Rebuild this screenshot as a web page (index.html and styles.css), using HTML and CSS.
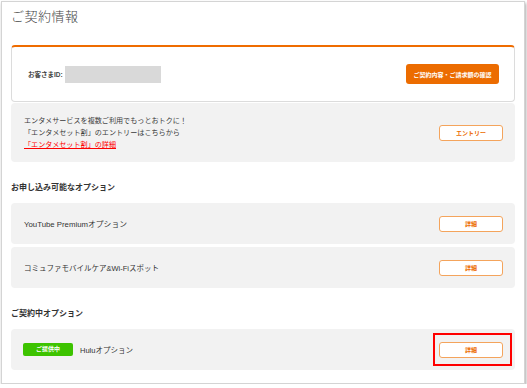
FILE: index.html
```html
<!DOCTYPE html>
<html lang="ja">
<head>
    <meta charset="UTF-8">
    <meta name="viewport" content="width=device-width, initial-scale=1.0">
    <title>ご契約情報</title>
    <link rel="stylesheet" href="styles.css">
</head>
<body>
    <div class="frame">
        <h1 class="title">ご契約情報</h1>

        <div class="account-card">
            <div class="account-id">
                <span class="id-label">お客さまID:</span>
                <span class="id-mask"></span>
            </div>
            <button class="primary-btn" type="button">ご契約内容・ご請求額の確認</button>
        </div>

        <div class="panel promo">
            <div class="promo-text">
                <p>エンタメサービスを複数ご利用でもっとおトクに！</p>
                <p>「エンタメセット割」のエントリーはこちらから</p>
                <p><a href="#">「エンタメセット割」の詳細</a></p>
            </div>
            <button class="outline-btn" type="button">エントリー</button>
        </div>

        <h2 class="section-title">お申し込み可能なオプション</h2>
        <div class="panel option-row">
            <span class="option-name latin">YouTube Premiumオプション</span>
            <button class="outline-btn" type="button">詳細</button>
        </div>
        <div class="panel option-row">
            <span class="option-name">コミュファモバイルケア&amp;Wi-Fiスポット</span>
            <button class="outline-btn" type="button">詳細</button>
        </div>

        <h2 class="section-title">ご契約中オプション</h2>
        <div class="panel option-row">
            <div class="option-left">
                <span class="status-badge">ご提供中</span>
                <span class="option-name">Huluオプション</span>
            </div>
            <span class="highlight">
                <button class="outline-btn" type="button">詳細</button>
            </span>
        </div>
    </div>
</body>
</html>
```

FILE: styles.css
```css
body {
    margin: 0;
    background-color: #fff;
    color: #333;
    font-family: "Liberation Sans", "Noto Sans CJK JP", sans-serif;
}

.frame {
    box-sizing: border-box;
    width: 524px;
    height: 383px;
    margin: 1px 0 0 1px;
    padding: 0 9px;
    border: 1px solid #d4d4d4;
    background-color: #fff;
    box-shadow: 1px 2px 3px rgba(0, 0, 0, 0.35);
}

.title {
    margin: 0 0 18px;
    padding-top: 5px;
    font-size: 13px;
    line-height: 20px;
    font-weight: 300;
    letter-spacing: 0.5px;
    color: #444;
}

.account-card {
    box-sizing: border-box;
    height: 57px;
    display: flex;
    align-items: center;
    justify-content: space-between;
    padding: 0 15px 0 16px;
    border: 1px solid #dcdcdc;
    border-top: 2px solid #ef6c00;
    border-radius: 4px;
}

.account-id {
    display: flex;
    align-items: center;
    gap: 2px;
}

.id-label {
    font-size: 6.5px;
    font-weight: 700;
    color: #444;
}

.id-mask {
    width: 96px;
    height: 17px;
    background-color: #d9d9d9;
}

.primary-btn {
    width: 93px;
    height: 20px;
    padding: 0;
    border: none;
    border-radius: 3px;
    background-color: #ec6c00;
    color: #fff;
    font-family: inherit;
    font-size: 6px;
    font-weight: 700;
}

.panel {
    box-sizing: border-box;
    display: flex;
    align-items: center;
    justify-content: space-between;
    background-color: #f2f2f2;
    border-radius: 4px;
    padding: 0 12px 0 13px;
}

.promo {
    height: 59px;
    margin-top: 1px;
}

.promo-text p {
    margin: 0;
    font-size: 7.1px;
    line-height: 12px;
    color: #3a3a3a;
}

.promo-text a {
    color: #f00;
    text-decoration: underline;
}

.outline-btn {
    box-sizing: border-box;
    width: 64px;
    height: 16px;
    padding: 0;
    border: 1px solid #f4a45c;
    border-radius: 3px;
    background-color: #fff;
    color: #ec6c00;
    font-family: inherit;
    font-size: 6px;
    font-weight: 700;
}

.section-title {
    margin: 19px 0 8px;
    font-size: 8px;
    line-height: 14px;
    font-weight: 700;
    color: #333;
}

.option-row {
    height: 41px;
    margin-bottom: 3px;
}

.option-name {
    font-size: 7.5px;
    color: #333;
}

.option-name.latin {
    font-size: 7.8px;
}

.option-left {
    display: flex;
    align-items: center;
    gap: 7px;
    margin-left: -1px;
}

.status-badge {
    width: 50px;
    height: 13px;
    line-height: 13px;
    border-radius: 2px;
    background-color: #3dc300;
    color: #fff;
    text-align: center;
    font-size: 6px;
    font-weight: 700;
}

.highlight {
    position: relative;
    display: flex;
}

.highlight::after {
    content: "";
    position: absolute;
    top: -9px;
    bottom: -8px;
    left: -6px;
    right: -9px;
    border: 2px solid #f00;
}
```
